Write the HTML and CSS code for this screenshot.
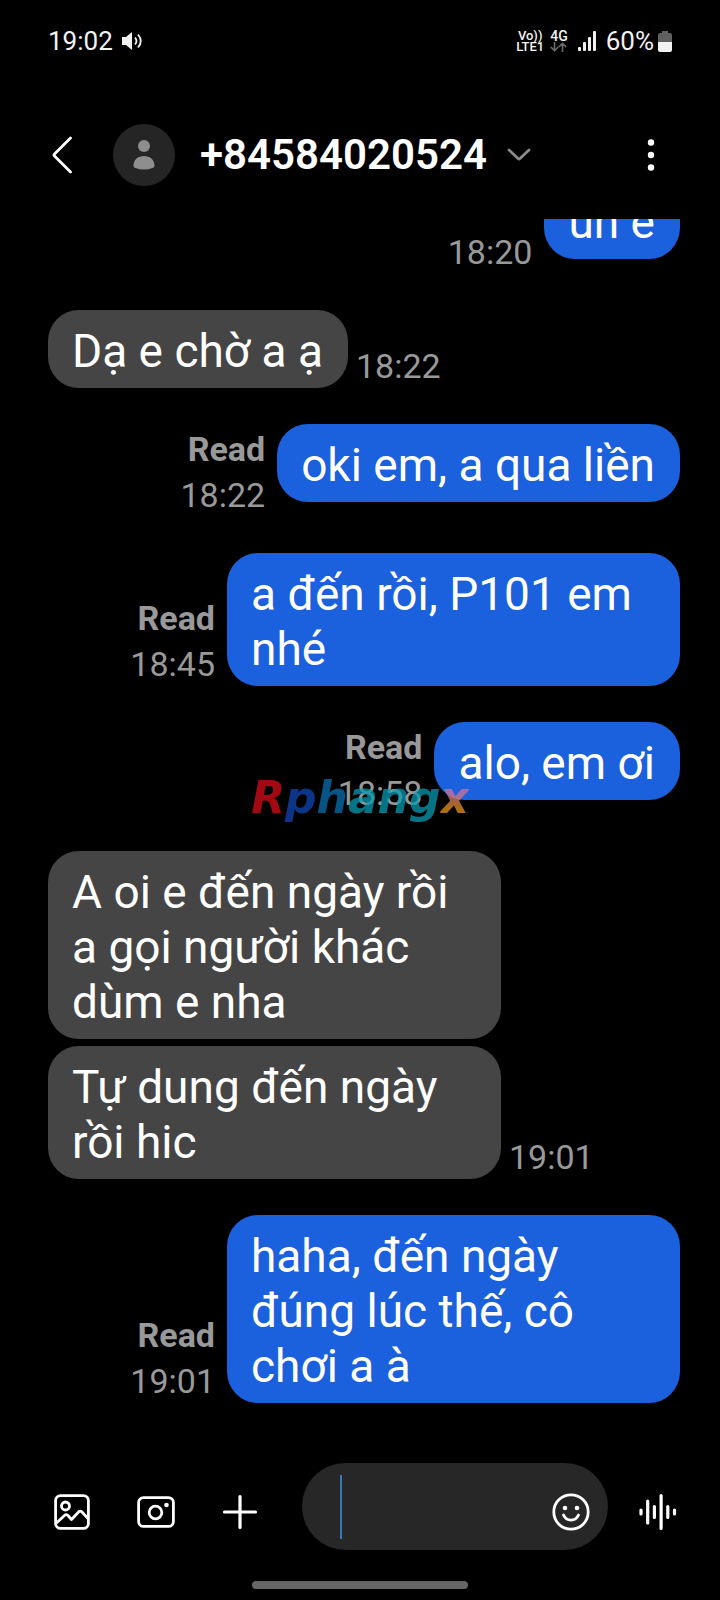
FILE: index.html
```html
<!DOCTYPE html>
<html lang="vi">
<head>
<meta charset="utf-8">
<meta name="viewport" content="width=device-width, initial-scale=1">
<title>+84584020524</title>
<link rel="stylesheet" href="styles.css">
</head>
<body>
<div class="phone">
  <div class="status">
    <div class="status-group">
      <span class="clock">19:02</span>
      <svg width="22" height="20" viewBox="0 0 22 20" fill="none" aria-hidden="true"><path d="M1 6h4l6-5v18l-6-5H1z" fill="#f2f2f2"/><path d="M14 6.500q3 3.500 0 7M17 3.500q5.500 6.500 0 13" stroke="#f2f2f2" stroke-width="1.800"/></svg>
    </div>
    <div class="status-group status-right">
      <span class="volte"><span>Vo))</span><span>LTE1</span></span>
      <span class="net"><span>4G</span><svg width="17" height="10" viewBox="0 0 17 10" fill="none" stroke="#6c6c6c" stroke-width="1.600" aria-hidden="true"><path d="M4.500 0v8.500M.8 5l3.700 3.700L8.200 5M12.500 10V1.500M8.800 5l3.700-3.700L16.200 5"/></svg></span>
      <svg width="18" height="20" viewBox="0 0 18 20" fill="#f0f0f0" aria-hidden="true"><rect y="16" width="3" height="4" rx="1"/><rect x="5" y="11" width="3" height="9" rx="1"/><rect x="10" y="6" width="3" height="14" rx="1"/><rect x="15" width="3" height="20" rx="1"/></svg>
      <span class="battery-label">60%</span>
      <svg class="battery" width="14" height="21" viewBox="0 0 14 21" aria-hidden="true"><path d="M4 0h6v2h2q2 0 2 2v7H0V4q0-2 2-2h2z" fill="#606060"/><path d="M0 11h14v8q0 2-2 2H2q-2 0-2-2z" fill="#f2f2f2"/></svg>
    </div>
  </div>

  <header class="header">
    <button class="icon-btn" type="button" aria-label="Back"><svg width="22" height="38" viewBox="0 0 22 38" fill="none" stroke="#fff" stroke-width="2.800" stroke-linecap="round" stroke-linejoin="round"><path d="M18.500 2 2.500 18q-1 1 0 2l16 16"/></svg></button>
    <span class="avatar"><svg width="22" height="30" viewBox="0 0 22 30" fill="#8e8e8e" aria-hidden="true"><circle cx="11" cy="6" r="6"/><path d="M.5 26C.5 19.500 5 16 11 16s10.500 3.500 10.500 10q0 1.500-2 2-4 1.500-8.500 1.500T2.500 28q-2-.5-2-2z"/></svg></span>
    <h1 class="title">+84584020524</h1>
    <button class="icon-btn" type="button" aria-label="Details"><svg width="24" height="14" viewBox="0 0 24 14" fill="none" stroke="#8a8a8a" stroke-width="2.800" stroke-linecap="round" stroke-linejoin="round"><path d="m2 2 9 8.500q1 1 2 0L22 2"/></svg></button>
    <button class="icon-btn more" type="button" aria-label="More options"><svg width="8" height="34" viewBox="0 0 8 34" fill="#fff"><circle cx="4" cy="4.500" r="3.200"/><circle cx="4" cy="17" r="3.200"/><circle cx="4" cy="29.500" r="3.200"/></svg></button>
  </header>

  <main class="chat">
    <div class="row sent"><div class="meta"><time>18:20</time></div><p class="bubble">un e</p></div>
    <div class="row"><p class="bubble">Dạ e chờ a ạ</p><div class="meta"><time>18:22</time></div></div>
    <div class="row sent"><div class="meta"><b>Read</b><time>18:22</time></div><p class="bubble">oki em, a qua liền</p></div>
    <div class="row sent"><div class="meta"><b>Read</b><time>18:45</time></div><p class="bubble">a đến rồi, P101 em nhé</p></div>
    <div class="row sent"><div class="meta"><b>Read</b><time>18:58</time></div><p class="bubble">alo, em ơi</p></div>
    <div class="group">
      <div class="row"><p class="bubble">A oi e đến ngày rồi a gọi người khác dùm e nha</p></div>
      <div class="row"><p class="bubble">Tự dung đến ngày rồi hic</p><div class="meta"><time>19:01</time></div></div>
    </div>
    <div class="row sent"><div class="meta"><b>Read</b><time>19:01</time></div><p class="bubble">haha, đến ngày đúng lúc thế, cô chơi a à</p></div>
  </main>

  <form class="composer">
    <button class="icon-btn" type="button" aria-label="Gallery"><svg width="36" height="36" viewBox="0 0 36 36" fill="none" stroke="#fff" stroke-width="2.800" stroke-linejoin="round"><rect x="1.600" y="1.600" width="32.800" height="32.800" rx="5"/><circle cx="11.500" cy="12" r="4"/><path d="m2.500 29 8.500-8q1.500-1 3 .5l3.500 4 7.500-8q1.500-1 3 .5l6 6.500"/></svg></button>
    <button class="icon-btn" type="button" aria-label="Camera"><svg width="38" height="32" viewBox="0 0 38 32" fill="none" stroke="#fff" stroke-width="2.800"><rect x="1.600" y="1.600" width="34.800" height="28.800" rx="5"/><circle cx="18.500" cy="16.500" r="6.300"/><circle cx="29.500" cy="9" r="2.300" fill="#fff" stroke="none"/></svg></button>
    <button class="icon-btn" type="button" aria-label="Add"><svg width="36" height="36" viewBox="0 0 36 36" fill="none" stroke="#fff" stroke-width="3.200" stroke-linecap="round"><path d="M18 2.500v31M2.500 18h31"/></svg></button>
    <div class="field">
      <span class="caret"></span>
      <input class="input" type="text" aria-label="Message">
      <button class="icon-btn" type="button" aria-label="Emoji"><svg width="38" height="38" viewBox="0 0 38 38" fill="none" stroke="#fff" stroke-width="2.800" stroke-linecap="round"><circle cx="19" cy="19" r="17.200"/><path d="M11.500 22c3 6.800 12 6.800 15 0"/><circle cx="13" cy="15" r="2.300" fill="#fff" stroke="none"/><circle cx="25" cy="15" r="2.300" fill="#fff" stroke="none"/></svg></button>
    </div>
    <button class="icon-btn" type="button" aria-label="Voice message"><svg width="38" height="38" viewBox="0 0 38 38" fill="none" stroke="#fff" stroke-width="3.200" stroke-linecap="round"><path d="M2 17v4M8.700 8v22M15.400 13.500v11M22.100 2.500v33M28.800 13.500v11M35.500 17v4"/></svg></button>
  </form>
  <div class="home-bar"></div>

  <div class="watermark"><span class="wm-red">R</span><span class="wm-blue">p</span><span class="wm-azure">h</span><span class="wm-teal">ang</span><span class="wm-orange">x</span></div>
</div>
</body>
</html>
```
FILE: styles.css
```css
* { box-sizing: border-box; }

body {
  margin: 0;
  background: #000;
  color: #fff;
  font-family: Roboto, "Noto Sans", sans-serif;
}

.phone {
  position: relative;
  display: flex;
  flex-direction: column;
  height: 100vh;
}

svg { display: block; flex: none; }

/* Status bar */
.status {
  display: flex;
  align-items: center;
  justify-content: space-between;
  height: 82px;
  padding: 0 48px;
  font-size: 26px;
  color: #f2f2f2;
}

.status-group { display: flex; align-items: center; gap: 8px; }
.status-right { gap: 10px; }

.volte,
.net {
  display: flex;
  flex-direction: column;
  align-items: center;
  font-size: 13px;
  line-height: 11px;
  font-weight: 500;
}

.volte { margin-right: -4px; }
.net { font-size: 14px; }
.battery { margin-left: -6px; }

/* Conversation header */
.header {
  display: flex;
  align-items: center;
  height: 137px;
  padding: 8px 65px 0 52px;
}

.icon-btn {
  flex: none;
  padding: 0;
  border: 0;
  background: none;
}

.avatar {
  display: grid;
  place-items: center;
  width: 62px;
  height: 62px;
  margin-left: 39px;
  border-radius: 50%;
  background: #252525;
}

.title {
  margin: 0 20px 0 25px;
  font-size: 42px;
  line-height: 50px;
  font-weight: 600;
}

.more { margin-left: auto; }

/* Messages */
.chat {
  flex: 1;
  min-height: 0;
  display: flex;
  flex-direction: column;
  justify-content: flex-end;
  gap: 36px;
  padding: 0 40px 20px 48px;
  overflow: hidden;
}

.row {
  flex: none;
  display: flex;
  align-items: flex-start;
  gap: 8px;
}

.sent {
  justify-content: flex-end;
  gap: 12px;
  min-height: 93px;
}

.group { display: flex; flex-direction: column; gap: 7px; }

.bubble {
  max-width: 453px;
  margin: 0;
  padding: 14px 25px 9px 24px;
  border-radius: 31px;
  background: #454545;
  font-size: 46px;
  line-height: 55px;
}

.sent .bubble { background: #1b60dc; }

.meta {
  flex: none;
  align-self: flex-end;
  display: flex;
  flex-direction: column;
  align-items: flex-end;
  margin-bottom: -1px;
  color: #999;
  font-size: 34px;
  line-height: 46px;
}

/* Composer */
.composer {
  display: flex;
  align-items: center;
  gap: 47px;
  padding: 40px 43px 0 54px;
}

.composer > .icon-btn { padding-top: 11px; }

.field {
  flex: 1;
  min-width: 0;
  display: flex;
  align-items: center;
  height: 87px;
  padding: 0 18px 0 38px;
  border-radius: 44px;
  background: #272727;
}

.composer > .field { margin: 0 -16px 0 -3px; }
.field .icon-btn { padding-top: 11px; }

.input {
  flex: 1;
  min-width: 0;
  border: 0;
  outline: 0;
  background: none;
  color: #fff;
  font: inherit;
  font-size: 46px;
}

.caret { width: 2px; height: 64px; background: #3a78bb; }

.home-bar {
  flex: none;
  align-self: center;
  width: 30%;
  height: 8px;
  margin: 31px 0 11px;
  border-radius: 4px;
  background: #666;
}

/* Centred overlay mark */
.watermark {
  position: absolute;
  top: 50%;
  left: 50%;
  transform: translate(-50%, -50%);
  padding-bottom: 4px;
  font-family: "DejaVu Sans", sans-serif;
  font-size: 44px;
  line-height: 50px;
  font-weight: 700;
  font-style: italic;
  opacity: 0.75;
  pointer-events: none;
}

.wm-red { color: #d80c18; }
.wm-blue { color: #1046b4; }
.wm-azure { color: #0870b0; }
.wm-teal { color: #089ab0; }
.wm-orange {
  background: linear-gradient(#d070a0 40%, #e89020 70%);
  background-clip: text;
  color: transparent;
}
```
